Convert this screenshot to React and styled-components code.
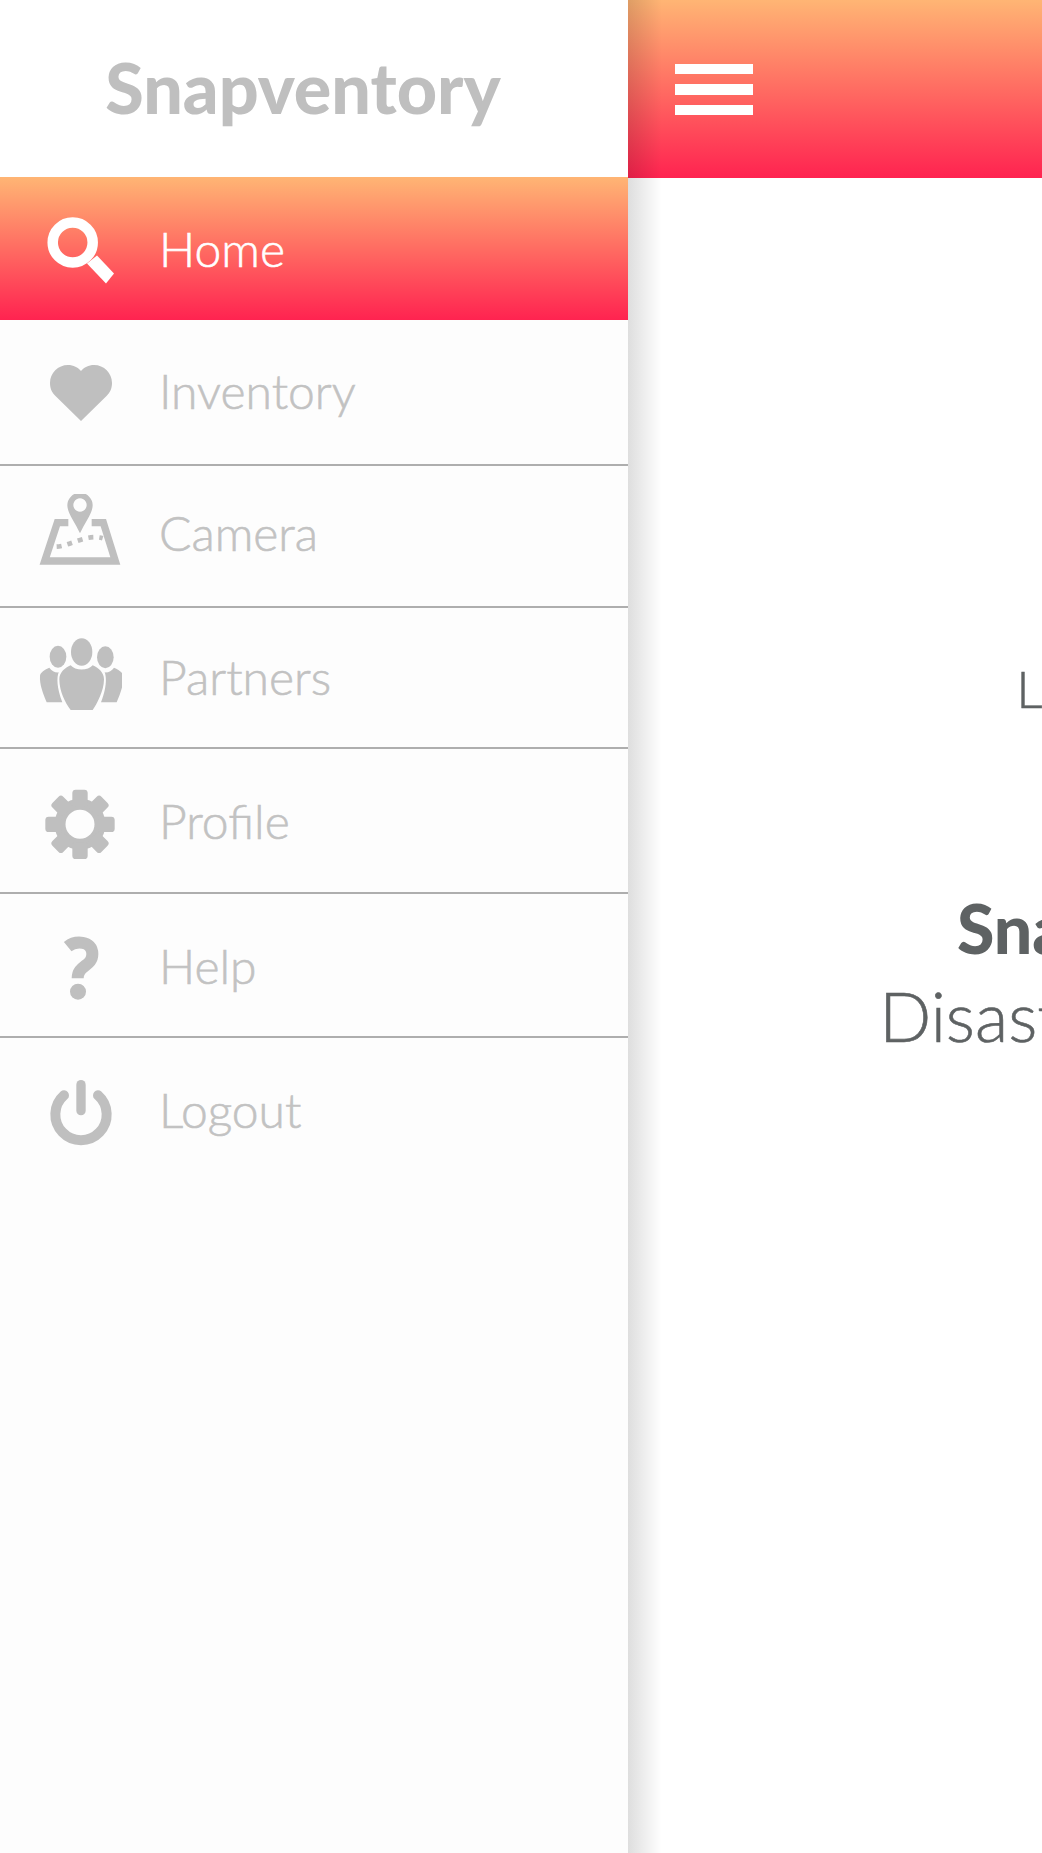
import React from "react";
import styled, {createGlobalStyle} from "styled-components";

const brand = "linear-gradient(180deg, #ffb574 0%, #ff2350 100%)";

const GlobalStyle = createGlobalStyle`
  html, body {
    margin: 0;
    padding: 0;
    background: #fff;
  }
  body {
    font-family: Lato, "Open Sans", sans-serif;
  }
`;

const Page = styled.div`
  display: flex;
  width: 1042px;
  height: 1853px;
  overflow: hidden;
`;

const Sidebar = styled.nav`
  flex: 0 0 628px;
  background: #fdfdfd;
`;

const Brand = styled.div`
  height: 177px;
  box-sizing: border-box;
  padding: 0 22px 4px 0;
  display: flex;
  align-items: center;
  justify-content: center;
  background: #fff;
  font-size: 70px;
  font-weight: 900;
  color: #bfbfbf;
`;

const MenuRow = styled.div`
  height: ${p => p.$height}px;
  box-sizing: border-box;
  display: flex;
  align-items: center;
  padding-left: 38px;
  background: ${p => (p.$active ? brand : "transparent")};
  color: ${p => (p.$active ? "#fff" : "#c2c2c2")};
  border-bottom: ${p => (p.$divider ? "2px solid #aeaeae" : "none")};
`;

const IconBox = styled.svg`
  flex: 0 0 84px;
  width: 84px;
  height: 84px;
  margin-right: 37px;
  fill: currentColor;
  color: ${p => (p.$active ? "#fff" : "#bfbfbf")};
`;

const MenuLabel = styled.span`
  font-size: 48px;
  font-weight: 300;
  line-height: 1;
  -webkit-text-stroke: 0.6px currentColor;
  margin-top: ${p => p.$nudge || 0}px;
`;

const Main = styled.main`
  position: relative;
  flex: 0 0 1042px;
  background: #fff;
`;

const Edge = styled.div`
  position: absolute;
  top: 0;
  bottom: 0;
  left: 0;
  width: 34px;
  background: linear-gradient(90deg, rgba(0, 0, 0, 0.13), rgba(0, 0, 0, 0));
`;

const TopBar = styled.header`
  height: 178px;
  box-sizing: border-box;
  padding-left: 47px;
  display: flex;
  align-items: center;
  background: ${brand};
`;

const Burger = styled.div`
  display: flex;
  flex-direction: column;
  gap: 10px;
  width: 78px;
  margin-top: 1px;
`;

const BurgerBar = styled.span`
  display: block;
  height: 10.5px;
  background: #fff;
`;

const Content = styled.section`
  padding-top: 480px;
  display: flex;
  flex-direction: column;
  align-items: center;
  color: #5e6263;
`;

const Logo = styled.div`
  padding-left: 20px;
  font-size: 52px;
  font-weight: 300;
  line-height: 60px;
  letter-spacing: 6px;
  -webkit-text-stroke: 0.5px currentColor;
`;

const AppName = styled.h1`
  margin: 168px 0 0;
  font-size: 68px;
  font-weight: 900;
  line-height: 84px;
`;

const Tagline = styled.div`
  font-size: 68.5px;
  font-weight: 300;
  line-height: 92px;
  -webkit-text-stroke: 0.6px currentColor;
`;

const SearchIcon = ({active}) => (
    <IconBox $active={active} viewBox="0 0 84 84">
        <circle cx="34.7" cy="35.5" r="20" fill="none" stroke="currentColor" strokeWidth="10.5"/>
        <polygon points="76,66.5 68,76.5 49,56.5 59,48.5"/>
    </IconBox>
);

const HeartIcon = () => (
    <IconBox viewBox="0 0 84 84">
        <path d="M43 71 L17.5 46 C13.5 42 12 38 12 33 C12 23 20 15 30 15 C35.5 15 40 17.5 43 21 C46 17.5 50.5 15 56 15 C66 15 74 23 74 33 C74 38 72.5 42 68.5 46 Z"/>
    </IconBox>
);

const MapIcon = () => (
    <IconBox viewBox="114 72 252 252">
        <path d="M205 158 H172 L134 273 H346 L310 158 H275" fill="none" stroke="currentColor" strokeWidth="22"/>
        <path fillRule="evenodd" d="M240 68 a38 38 0 0 1 38 38 c0 22 -22 50 -38 84 c-16 -34 -38 -62 -38 -84 a38 38 0 0 1 38 -38z M240 85 a20 20 0 1 0 0.01 0z"/>
        <path d="M170 230 C210 228 260 190 308 205" fill="none" stroke="currentColor" strokeWidth="14" strokeDasharray="15 18"/>
    </IconBox>
);

const PeopleIcon = () => (
    <IconBox viewBox="114 495 252 252">
        <ellipse cx="245" cy="543" rx="32" ry="41"/>
        <ellipse cx="174" cy="557" rx="25" ry="33"/>
        <ellipse cx="316" cy="559" rx="25" ry="33"/>
        <path d="M178 625 C178 605 195 590 212 583 C225 600 265 600 278 583 C295 590 312 605 312 625 C312 660 290 700 278 717 H212 C195 695 178 660 178 625Z"/>
        <path d="M148 590 C155 600 165 605 176 604 C170 620 170 650 187 694 H140 C130 670 118 640 120 615 C120 605 135 595 148 590Z"/>
        <path d="M342 590 C335 600 325 605 314 604 C320 620 320 650 303 694 H350 C360 670 372 640 370 615 C370 605 355 595 342 590Z"/>
    </IconBox>
);

const GearIcon = () => (
    <IconBox viewBox="114 24 252 252">
        <circle cx="240" cy="160" r="60" fill="none" stroke="currentColor" strokeWidth="33"/>
        {[0, 45, 90, 135, 180, 225, 270, 315].map(angle => (
            <rect key={angle} x="217" y="56" width="46" height="50" rx="10" transform={`rotate(${angle} 240 160)`}/>
        ))}
    </IconBox>
);

const HelpIcon = () => (
    <IconBox viewBox="114 459 252 252">
        <path d="M203 530 C225 512 277 510 277 552 C277 590 233 585 233 625" fill="none" stroke="currentColor" strokeWidth="36"/>
        <circle cx="234" cy="665" r="24"/>
    </IconBox>
);

const PowerIcon = () => (
    <IconBox viewBox="114 888 252 252">
        <path d="M192 970 A77 77 0 1 0 294 970" fill="none" stroke="currentColor" strokeWidth="30" strokeLinecap="round"/>
        <path d="M243 938 V1016" fill="none" stroke="currentColor" strokeWidth="28" strokeLinecap="round"/>
    </IconBox>
);

const menu = [
    {label: "Home", Icon: SearchIcon, height: 143, active: true, nudge: 1},
    {label: "Inventory", Icon: HeartIcon, height: 146, nudge: -2},
    {label: "Camera", Icon: MapIcon, height: 142, nudge: -7},
    {label: "Partners", Icon: PeopleIcon, height: 141, nudge: -2},
    {label: "Profile", Icon: GearIcon, height: 145},
    {label: "Help", Icon: HelpIcon, height: 144, nudge: 2},
    {label: "Logout", Icon: PowerIcon, height: 143},
];

export default function App() {
    return (
        <Page>
            <GlobalStyle/>
            <Sidebar>
                <Brand>Snapventory</Brand>
                {menu.map(({label, Icon, height, active, nudge}, i) => (
                    <MenuRow key={label} $height={height} $active={active} $divider={i > 0 && i < menu.length - 1}>
                        <Icon active={active}/>
                        <MenuLabel $nudge={nudge}>{label}</MenuLabel>
                    </MenuRow>
                ))}
            </Sidebar>
            <Main>
                <TopBar>
                    <Burger>
                        <BurgerBar/>
                        <BurgerBar/>
                        <BurgerBar/>
                    </Burger>
                </TopBar>
                <Content>
                    <Logo>Logo Here</Logo>
                    <AppName>Snapventory</AppName>
                    <Tagline>Disaster Inventory</Tagline>
                </Content>
                <Edge/>
            </Main>
        </Page>
    );
}
